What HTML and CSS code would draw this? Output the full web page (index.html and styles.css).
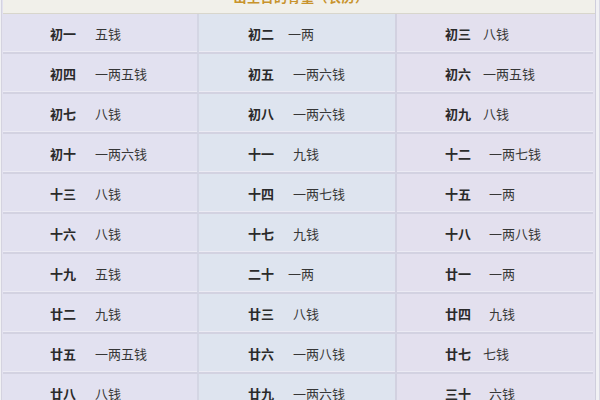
FILE: index.html
```html
<!DOCTYPE html>
<html lang="zh">
<head>
<meta charset="utf-8">
<link rel="stylesheet" href="styles.css">
</head>
<body>
<div class="frame">
  <div class="sheet">
    <div class="caption"><div class="caption-text">出生日的骨重（农历）</div></div>
    <div class="grid">
      <div class="cell c1"><b>初一</b><span>五钱</span></div>
      <div class="cell c2"><b>初二</b><span class="tight">一两</span></div>
      <div class="cell c3"><b>初三</b><span class="tight">八钱</span></div>

      <div class="cell c1"><b>初四</b><span>一两五钱</span></div>
      <div class="cell c2"><b>初五</b><span>一两六钱</span></div>
      <div class="cell c3"><b>初六</b><span class="tight">一两五钱</span></div>

      <div class="cell c1"><b>初七</b><span>八钱</span></div>
      <div class="cell c2"><b>初八</b><span>一两六钱</span></div>
      <div class="cell c3"><b>初九</b><span class="tight">八钱</span></div>

      <div class="cell c1"><b>初十</b><span>一两六钱</span></div>
      <div class="cell c2"><b>十一</b><span>九钱</span></div>
      <div class="cell c3"><b>十二</b><span>一两七钱</span></div>

      <div class="cell c1"><b>十三</b><span>八钱</span></div>
      <div class="cell c2"><b>十四</b><span>一两七钱</span></div>
      <div class="cell c3"><b>十五</b><span>一两</span></div>

      <div class="cell c1"><b>十六</b><span>八钱</span></div>
      <div class="cell c2"><b>十七</b><span>九钱</span></div>
      <div class="cell c3"><b>十八</b><span>一两八钱</span></div>

      <div class="cell c1"><b>十九</b><span>五钱</span></div>
      <div class="cell c2"><b>二十</b><span class="tight">一两</span></div>
      <div class="cell c3"><b>廿一</b><span>一两</span></div>

      <div class="cell c1"><b>廿二</b><span>九钱</span></div>
      <div class="cell c2"><b>廿三</b><span>八钱</span></div>
      <div class="cell c3"><b>廿四</b><span>九钱</span></div>

      <div class="cell c1"><b>廿五</b><span>一两五钱</span></div>
      <div class="cell c2"><b>廿六</b><span>一两八钱</span></div>
      <div class="cell c3"><b>廿七</b><span class="tight">七钱</span></div>

      <div class="cell c1"><b>廿八</b><span>八钱</span></div>
      <div class="cell c2"><b>廿九</b><span>一两六钱</span></div>
      <div class="cell c3"><b>三十</b><span>六钱</span></div>
    </div>
  </div>
</div>
</body>
</html>
```
FILE: styles.css
```css
html, body {
  margin: 0;
  padding: 0;
}
body {
  width: 600px;
  height: 400px;
  overflow: hidden;
  background: #f1f1f4;
  font-family: "Microsoft YaHei", "Noto Sans CJK SC", "Noto Sans", sans-serif;
  color: #333333;
}
.frame {
  padding-left: 1px;
  padding-right: 3px;
  border-right: 1px solid #d9d8e4;
  width: 595px;
}
.sheet {
  border-left: 1px solid #d4d3e0;
  border-right: 1px solid #cfcedc;
  padding-left: 1px;
  padding-right: 3px;
  background: #e3e1ef;
}
.caption {
  height: 13px;
  border-bottom: 1px solid #d8d6cc;
  background: #f1f0ea;
  overflow: hidden;
  margin-right: -3px;
}
.caption-text {
  margin-top: -12px;
  padding-left: 4px;
  text-align: center;
  font-size: 13px;
  line-height: 18px;
  font-weight: bold;
  color: #c8932c;
  letter-spacing: 0.5px;
}
.grid {
  display: grid;
  grid-template-columns: 196px 198px 196px;
  grid-auto-rows: 40px;
}
.cell {
  display: flex;
  align-items: center;
  padding-left: 47px;
  font-size: 13px;
  line-height: 1;
  border-bottom: 2px solid #d3d2e1;
  box-shadow: inset 0 -1px 0 #ecebf4;
}
.cell b {
  font-weight: bold;
  color: #2a2a2a;
  width: 26px;
  flex: none;
}
.cell span {
  margin-left: 19px;
  color: #363636;
}
.c1 {
  background: #e2e1f0;
  border-right: 2px solid #d4d6e4;
}
.c2 {
  background: #dee4ef;
  border-right: 2px solid #d2d1e0;
  padding-left: 49px;
}
.c3 {
  background: #e3e0ee;
  padding-left: 48px;
}
.c3 span {
  margin-left: 18px;
}
.c3 span.tight {
  margin-left: 12px;
}
.c2 span.tight {
  margin-left: 14px;
}
```
